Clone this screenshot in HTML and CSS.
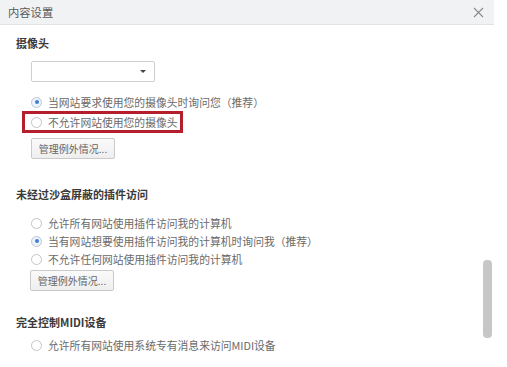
FILE: index.html
```html
<!DOCTYPE html>
<html lang="zh-CN">
<head>
    <meta charset="UTF-8">
    <title>内容设置</title>
    <link rel="stylesheet" href="styles.css">
</head>
<body>
    <div class="dialog">
        <div class="dialog-header">
            <span class="dialog-title">内容设置</span>
            <span class="close-btn">
                <svg width="11" height="11" viewBox="0 0 11 11"><path d="M1 1L10 10M10 1L1 10" stroke="#8a8a8a" stroke-width="1.1" fill="none"/></svg>
            </span>
        </div>

        <div class="dialog-body">
            <!-- 摄像头 -->
            <div class="section section-camera">
                <h3>摄像头</h3>
                <div class="select-box"><span class="select-arrow"></span></div>
                <div class="option first-option"><span class="radio checked"></span>当网站要求使用您的摄像头时询问您（推荐）</div>
                <div class="option highlight-box"><span class="radio"></span>不允许网站使用您的摄像头</div>
                <button class="btn-manage">管理例外情况...</button>
            </div>

            <!-- 插件 -->
            <div class="section section-plugin">
                <h3>未经过沙盒屏蔽的插件访问</h3>
                <div class="option-list">
                    <div class="option"><span class="radio"></span>允许所有网站使用插件访问我的计算机</div>
                    <div class="option"><span class="radio checked"></span>当有网站想要使用插件访问我的计算机时询问我（推荐）</div>
                    <div class="option"><span class="radio"></span>不允许任何网站使用插件访问我的计算机</div>
                </div>
                <button class="btn-manage btn-tight">管理例外情况...</button>
            </div>

            <!-- MIDI -->
            <div class="section section-midi">
                <h3>完全控制MIDI设备</h3>
                <div class="option midi-option"><span class="radio"></span>允许所有网站使用系统专有消息来访问MIDI设备</div>
            </div>

            <div class="scroll-thumb"></div>
        </div>
    </div>
</body>
</html>
```

FILE: styles.css
```css
/* 内容设置ダイアログ */
body {
    margin: 0;
    padding: 0;
    background-color: #fff;
    font-family: "Noto Sans CJK SC", "Liberation Sans", sans-serif;
    color: #555;
}
.dialog {
    width: 494px;
    height: 367px;
    background-color: #fff;
    overflow: hidden;
}
.dialog-header {
    height: 24px;
    background-color: #f1f2f4;
    border-bottom: 1px solid #e2e3e5;
    display: flex;
    align-items: center;
    justify-content: space-between;
    padding: 0 10px 0 8px;
}
.dialog-title {
    font-size: 11.3px;
    color: #5a5a5a;
}
.close-btn {
    display: flex;
    align-items: center;
}
.dialog-body {
    position: relative;
    height: 342px;
    padding-left: 16px;
}
h3 {
    margin: 0;
    font-size: 11px;
    line-height: 16px;
    font-weight: bold;
    color: #3a3a3a;
}
.section-camera h3 {
    padding-top: 10px;
}
.section-plugin {
    margin-top: 27px;
}
.section-midi {
    margin-top: 23px;
}
.select-box {
    position: relative;
    width: 122px;
    height: 19px;
    margin: 10px 0 0 15px;
    border: 1px solid #cfcfcf;
    border-radius: 2px;
    background-color: #fff;
}
.select-arrow {
    position: absolute;
    right: 8px;
    top: 8px;
    border-left: 3px solid transparent;
    border-right: 3px solid transparent;
    border-top: 3px solid #444;
}
.option {
    display: flex;
    align-items: center;
    height: 18px;
    font-size: 10.8px;
    color: #6a6a6a;
    padding-left: 15px;
    white-space: nowrap;
}
.first-option {
    margin-top: 11px;
}
.highlight-box {
    width: 149px;
    height: 16px;
    margin-left: 6px;
    padding-left: 6px;
    border: 3px solid #b51f2b;
}
.radio {
    width: 9px;
    height: 9px;
    border: 1px solid #c4c4c4;
    border-radius: 50%;
    margin-right: 6px;
    background-color: #fff;
    flex-shrink: 0;
    position: relative;
}
.radio.checked {
    border-color: #b8c8dc;
    background-color: #eef3fa;
}
.radio.checked::after {
    content: "";
    position: absolute;
    left: 2.5px;
    top: 2.5px;
    width: 4px;
    height: 4px;
    border-radius: 50%;
    background-color: #3d7fd6;
}
.btn-manage {
    display: block;
    margin: 5px 0 0 15px;
    width: 84px;
    height: 21px;
    padding: 0;
    font-family: "Noto Sans CJK SC", "Liberation Sans", sans-serif;
    font-size: 10px;
    color: #666;
    background: linear-gradient(#fafafa, #eeeeee);
    border: 1px solid #cacaca;
    border-radius: 2px;
}
.btn-tight {
    margin-top: 2px;
    margin-left: 14px;
}
.option-list {
    margin-top: 12px;
}
.midi-option {
    margin-top: 6px;
}
.scroll-thumb {
    position: absolute;
    left: 483px;
    top: 235px;
    width: 9px;
    height: 78px;
    border-radius: 4px;
    background-color: #c7c7c7;
}
```
